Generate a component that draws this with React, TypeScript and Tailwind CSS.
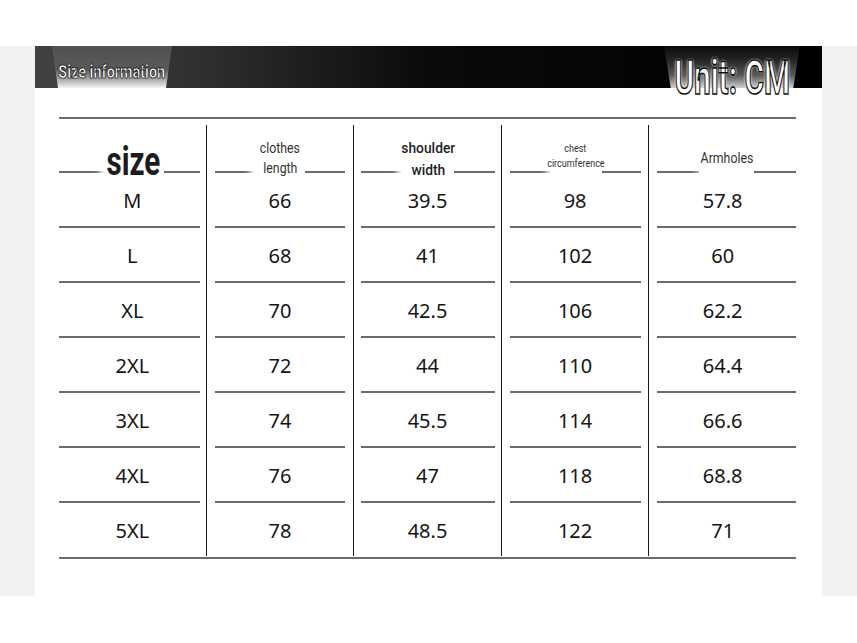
import React from "react";

const rows = [
  ["M", "66", "39.5", "98", "57.8"],
  ["L", "68", "41", "102", "60"],
  ["XL", "70", "42.5", "106", "62.2"],
  ["2XL", "72", "44", "110", "64.4"],
  ["3XL", "74", "45.5", "114", "66.6"],
  ["4XL", "76", "47", "118", "68.8"],
  ["5XL", "78", "48.5", "122", "71"],
];

const lineMargins = ["mr-[6px]", "ml-2 mr-2", "ml-[7px] mr-[6px]", "ml-2 mr-[7px]", "ml-2"];

function Line({ grow = "flex-1" }: { grow?: string }) {
  return <div className={"h-[2px] bg-[#6b6b6b] " + grow} />;
}

function HeaderLabel({ col }: { col: number }) {
  if (col === 0) {
    return (
      <div className="w-[60px] flex justify-center mb-[-9px] bg-white shadow-[0_0_6px_4px_#fff]">
        <span className="inline-block scale-x-[0.74] text-[40px] leading-[40px] font-bold text-[#1c1c1c] font-['Roboto',sans-serif]">
          size
        </span>
      </div>
    );
  }
  if (col === 1) {
    return (
      <div className="w-[51px] flex flex-col items-center mb-[-5px] bg-white shadow-[0_0_6px_4px_#fff] text-[14px] leading-[20px] text-[#333] font-['Roboto',sans-serif]">
        <span className="inline-block scale-x-[0.88] whitespace-nowrap">clothes</span>
        <span className="inline-block scale-x-[0.88] whitespace-nowrap">length</span>
      </div>
    );
  }
  if (col === 2) {
    return (
      <div className="w-[53px] flex flex-col items-center mb-[-8px] bg-white shadow-[0_0_6px_4px_#fff] text-[15px] leading-[22px] font-medium text-[#222] font-['Roboto',sans-serif]">
        <span className="inline-block scale-x-[0.92] whitespace-nowrap">shoulder</span>
        <span className="inline-block scale-x-[0.92] whitespace-nowrap">width</span>
      </div>
    );
  }
  if (col === 3) {
    return (
      <div className="w-[52px] flex flex-col items-center mb-[2px] bg-white shadow-[0_0_6px_4px_#fff] text-[10px] leading-[15px] text-[#333] font-['Roboto',sans-serif]">
        <span className="inline-block scale-x-[0.9] whitespace-nowrap">chest</span>
        <span className="inline-block scale-x-[0.9] whitespace-nowrap">circumference</span>
      </div>
    );
  }
  return (
    <div className="w-[55px] flex justify-center mb-[5px] bg-white shadow-[0_0_6px_4px_#fff] text-[14px] leading-[20px] text-[#333] font-['Roboto',sans-serif]">
      <span className="inline-block scale-x-[0.88] whitespace-nowrap">Armholes</span>
    </div>
  );
}

export default function App() {
  return (
    <div className="w-[857px] h-[643px] bg-white pt-[46px]">
      <div className="bg-[#f2f2f2] h-[550px] px-[35px]">
        <div className="bg-white h-full">
          {/* Header bar */}
          <div className="h-[42px] flex justify-between bg-[linear-gradient(90deg,#424242_0%,#2e2e2e_22%,#0a0a0a_50%,#000_100%)]">
            <div className="ml-[17px] h-full w-[120px] pt-[8px] flex items-center justify-center bg-[linear-gradient(180deg,#505050_0%,#5a5a5a_55%,#bdbdbd_85%,#f4f4f4_100%)] [clip-path:polygon(0_0,100%_0,95%_100%,5%_100%)]">
              <span className="inline-block scale-x-[0.8] text-[18px] font-bold text-white font-['Roboto',sans-serif] [-webkit-text-stroke:0.6px_#111] [text-shadow:0_0_2px_#000] whitespace-nowrap">
                Size information
              </span>
            </div>
            <div className="relative mr-[22px] h-full w-[136px] flex justify-center items-start before:content-[''] before:absolute before:inset-0 before:bg-[linear-gradient(180deg,#0a0a0a_0%,#262626_35%,#5a5a5a_70%,#d0d0d0_100%)] before:[clip-path:polygon(0_0,100%_0,95%_100%,5%_100%)]">
              <span className="relative mt-[13px] h-[38px] inline-block scale-x-[0.62] text-[48px] leading-[38px] font-bold text-white font-['Roboto',sans-serif] [-webkit-text-stroke:1.6px_#111] [text-shadow:0_0_3px_#fff,0_0_3px_#fff] whitespace-nowrap">
                Unit: CM
              </span>
            </div>
          </div>

          {/* Table */}
          <div className="ml-[24px] mr-[26px] mt-[29px]">
            <div className="h-[2px] bg-[#6b6b6b]" />
            <div className="mt-[6px] flex">
              {lineMargins.map((m, c) => (
                <div key={c} className={"flex-1 flex flex-col " + (c > 0 ? "border-l border-[#1a1a1a]" : "")}>
                  <div className={"h-[48px] flex items-end " + m}>
                    <Line grow={c === 0 ? "flex-[45]" : "flex-1"} />
                    <HeaderLabel col={c} />
                    <Line grow={c === 0 ? "flex-[36]" : "flex-1"} />
                  </div>
                  {rows.map((r, i) => (
                    <div key={i} className="flex flex-col">
                      <div className="h-[53px] pt-[3px] flex items-center justify-center text-[20px] text-[#151515] font-['Noto_Sans',sans-serif]">
                        {r[c]}
                      </div>
                      {i < rows.length - 1 && <div className={"h-[2px] bg-[#6b6b6b] " + m} />}
                    </div>
                  ))}
                </div>
              ))}
            </div>
            <div className="mt-[1px] h-[2px] bg-[#6b6b6b]" />
          </div>
        </div>
      </div>
    </div>
  );
}
